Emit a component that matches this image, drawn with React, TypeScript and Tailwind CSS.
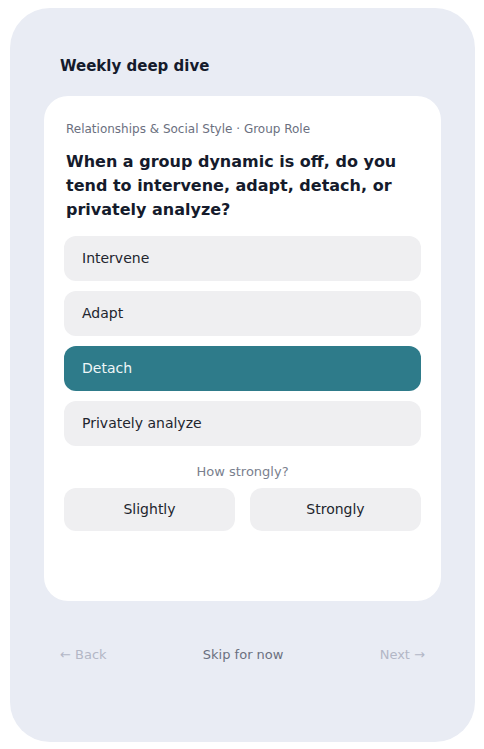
import React from "react";

const options = ["Intervene", "Adapt", "Detach", "Privately analyze"];

export default function App() {
    const selected = "Detach";

    return (
        <div className="w-screen h-screen bg-white pl-[10px] pr-[9px] pt-[8px] pb-[7px]" style={{ fontFamily: '"DejaVu Sans", sans-serif' }}>
            <div className="h-full rounded-[40px] bg-[#e9ecf4] px-[34px] pt-[48px]">

                {/* Header */}
                <h1 className="px-4 text-[15px] leading-[20px] font-bold text-[#151b2c]">Weekly deep dive</h1>

                {/* Question card */}
                <div className="mt-[20px] h-[505px] rounded-[24px] bg-white px-5 pt-6">
                    <p className="px-[2px] text-[12px] leading-[18px] text-[#6b7080]">Relationships &amp; Social Style · Group Role</p>
                    <h2 className="mt-[12px] px-[2px] text-[16px] leading-[24px] font-bold text-[#151b2c]">
                        When a group dynamic is off, do you tend to intervene, adapt, detach, or privately analyze?
                    </h2>

                    <div className="mt-[14px] flex flex-col gap-[10px]">
                        {options.map((opt) => (
                            <div
                                key={opt}
                                className={
                                    opt === selected
                                        ? "h-[45px] rounded-[12px] bg-[#2e7b8a] px-[18px] flex items-center text-[14px] text-[#eef6f7]"
                                        : "h-[45px] rounded-[12px] bg-[#efeff1] px-[18px] flex items-center text-[14px] text-[#22252e]"
                                }
                            >
                                {opt}
                            </div>
                        ))}
                    </div>

                    <p className="mt-[17px] text-center text-[13px] leading-[18px] text-[#7a7f8e]">How strongly?</p>
                    <div className="mt-[7px] grid grid-cols-2 gap-[15px]">
                        <div className="h-[43px] rounded-[12px] bg-[#efeff1] flex items-center justify-center text-[14px] text-[#22252e]">Slightly</div>
                        <div className="h-[43px] rounded-[12px] bg-[#efeff1] flex items-center justify-center text-[14px] text-[#22252e]">Strongly</div>
                    </div>
                </div>

                {/* Footer */}
                <div className="mt-[45px] px-4 flex items-center justify-between text-[13px] leading-[18px]">
                    <span className="text-[#b3b7c6]">← Back</span>
                    <span className="text-[#6b7080]">Skip for now</span>
                    <span className="text-[#b3b7c6]">Next →</span>
                </div>
            </div>
        </div>
    );
}
